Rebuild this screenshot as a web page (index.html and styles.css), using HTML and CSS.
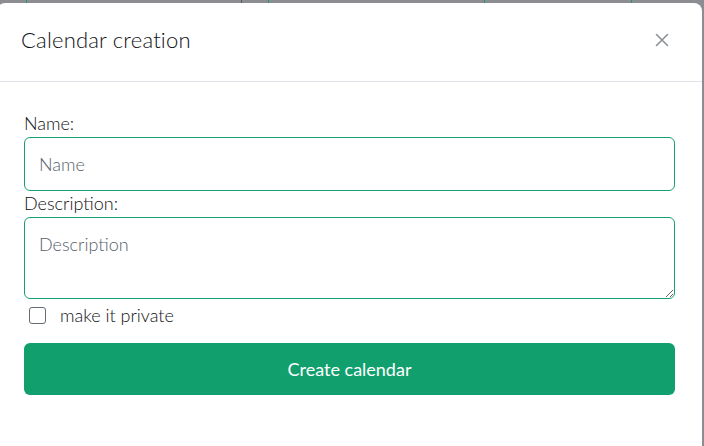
FILE: index.html
```html
<!DOCTYPE html>
<html lang="en">
<head>
<meta charset="utf-8">
<title>Calendar creation</title>
<link rel="stylesheet" href="styles.css">
</head>
<body>
<div class="modal">
  <div class="modal-header">
    <h5 class="modal-title">Calendar creation</h5>
    <button class="btn-close" type="button" aria-label="Close">
      <svg width="14" height="14" viewBox="0 0 14 14"><path d="M1.5 1.5 L12.5 12.5 M12.5 1.5 L1.5 12.5" stroke="#8b9097" stroke-width="1.6" fill="none" stroke-linecap="round"/></svg>
    </button>
  </div>
  <form class="modal-body">
    <label class="form-label" for="name">Name:</label>
    <input class="form-control" id="name" type="text" placeholder="Name">
    <label class="form-label" for="desc">Description:</label>
    <textarea class="form-control area" id="desc" placeholder="Description"></textarea>
    <div class="check-row">
      <input class="check" type="checkbox" id="priv">
      <label for="priv" class="check-label">make it private</label>
    </div>
    <button class="btn-primary" type="button">Create calendar</button>
  </form>
</div>
</body>
</html>
```

FILE: styles.css
```css
* { box-sizing: border-box; }
html, body { margin: 0; height: 100%; }
body {
  background-color: #8b8d93;
  background-image:
    linear-gradient(#1d9a6c, #1d9a6c),
    linear-gradient(#555a60, #555a60),
    linear-gradient(#1d9a6c, #1d9a6c),
    linear-gradient(#1d9a6c, #1d9a6c),
    linear-gradient(#1d9a6c, #1d9a6c);
  background-size: 1px 3px;
  background-repeat: no-repeat;
  background-position: 26px 0, 241px 0, 268px 0, 484px 0, 631px 0;
  font-family: Lato, "Open Sans", sans-serif;
  color: #0f1113;
  overflow: hidden;
}
.modal {
  margin: 3px 0 0 -3px;
  width: 705px;
  height: 460px;
  background: #fff;
  border-radius: 8px;
}
.modal-header {
  display: flex;
  align-items: center;
  justify-content: space-between;
  padding: 22px 33px 26px 24px;
  border-bottom: 1px solid #dee2e6;
}
.modal-title {
  margin: 0;
  font-size: 22px;
  font-weight: 300;
  letter-spacing: 0.2px;
  line-height: 30px;
}
.btn-close {
  border: 0;
  background: none;
  padding: 0;
  width: 14px;
  height: 14px;
  display: flex;
}
.modal-body {
  display: flex;
  flex-direction: column;
  padding: 29px 27px 24px 27px;
}
.form-label {
  font-size: 18px;
  font-weight: 300;
  line-height: 24px;
  margin-bottom: 2px;
}
.form-control {
  width: 100%;
  height: 54px;
  border: 1px solid #17a070;
  border-radius: 6px;
  padding: 0 14px;
  font-family: inherit;
  font-size: 18px;
  font-weight: 300;
  color: #212529;
  outline: none;
  background: #fff;
}
.form-control::placeholder { color: #56606a; opacity: 1; }
.area {
  height: 82px;
  padding-top: 14px;
  line-height: 24px;
  resize: vertical;
  margin-bottom: 4px;
}
.check-row {
  display: flex;
  align-items: center;
  height: 24px;
  margin-bottom: 16px;
}
.check {
  appearance: none;
  -webkit-appearance: none;
  margin: 0 14px 0 5px;
  width: 17px;
  height: 17px;
  border: 1px solid #656b73;
  border-radius: 3px;
  background: #fff;
}
.check-label {
  font-size: 18px;
  font-weight: 300;
  line-height: 24px;
}
.btn-primary {
  height: 52px;
  width: 100%;
  border: 0;
  border-radius: 6px;
  background: #129f6e;
  color: #fff;
  font-family: inherit;
  font-size: 18px;
  font-weight: 400;
}
```
